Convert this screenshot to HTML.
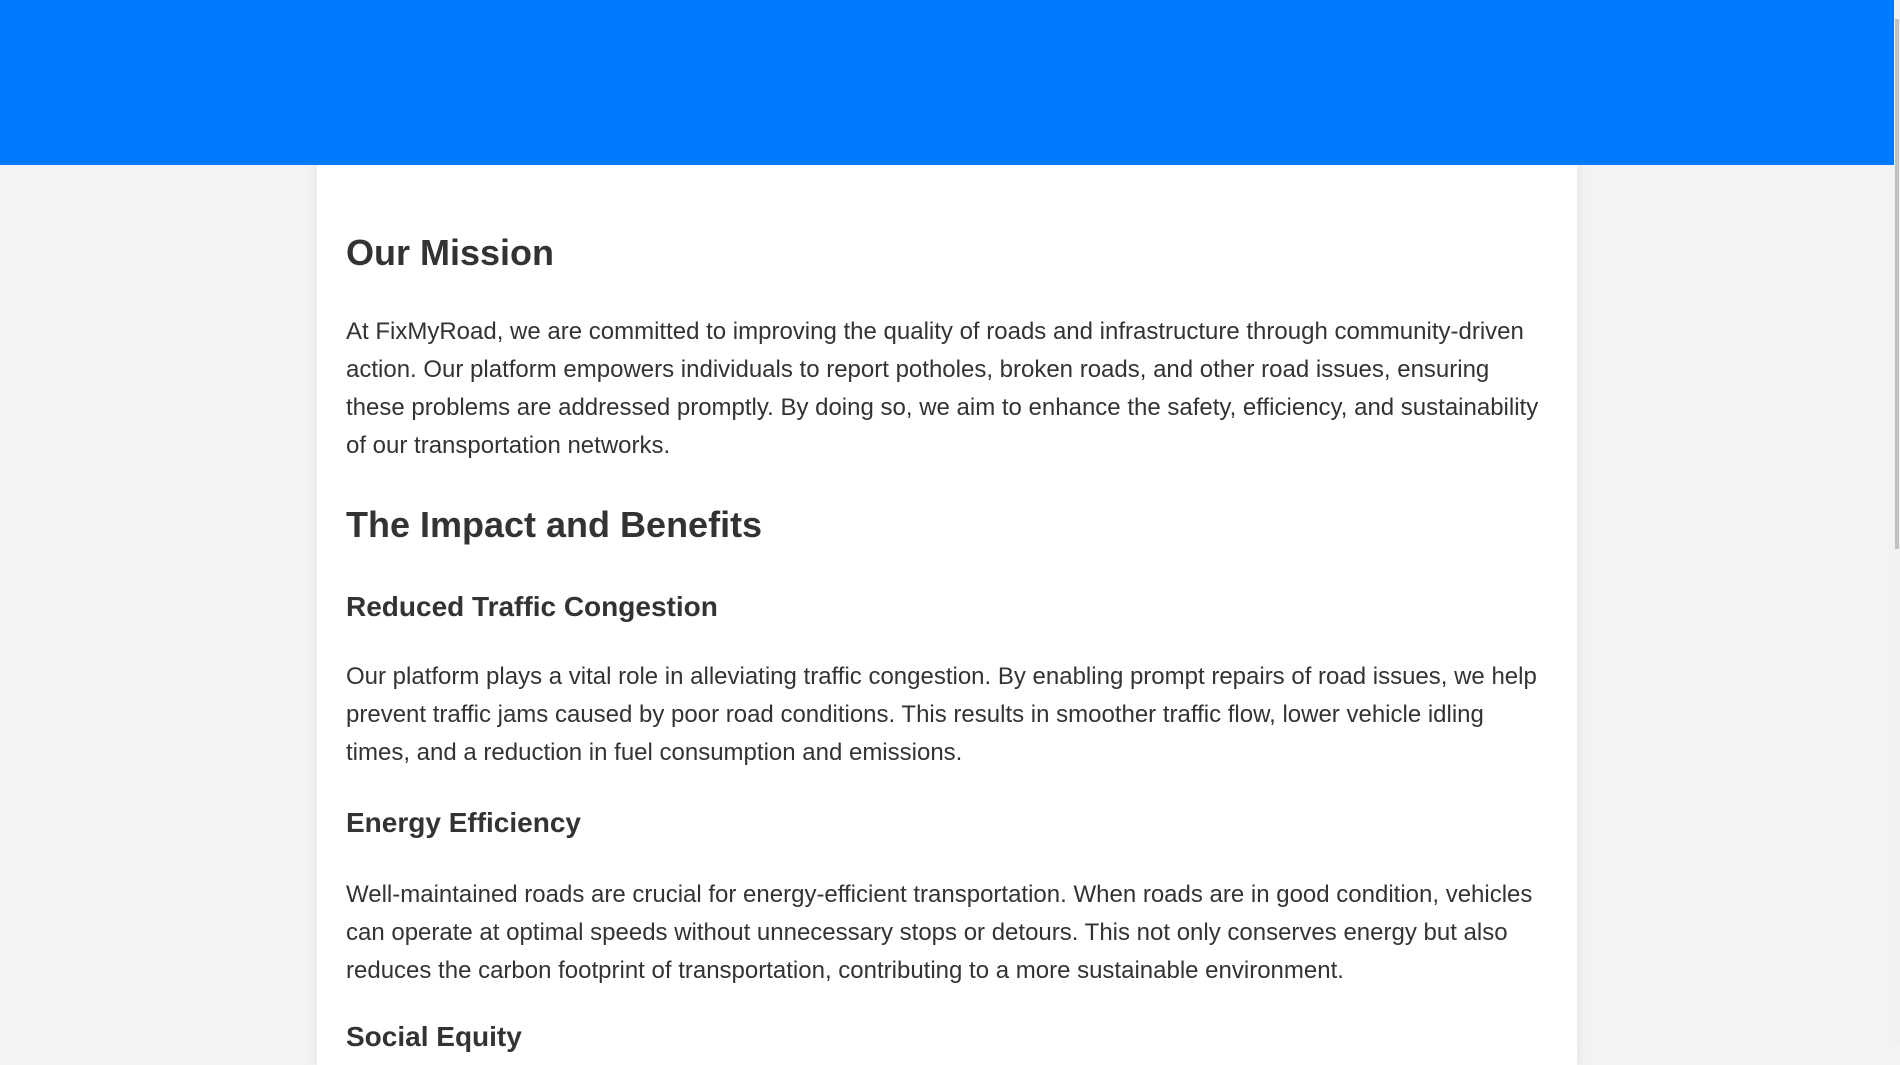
<!DOCTYPE html>
<html><head><meta charset="utf-8"><style>
html,body{margin:0;padding:0;}
body{width:1900px;height:1045px;overflow:hidden;background:#f3f3f3;font-family:"Liberation Sans",Arial,sans-serif;color:#333;position:relative;}
.hdr{position:absolute;left:0;top:0;width:1894px;height:165px;background:#007bff;}
.sb{position:absolute;right:0;top:0;width:6px;height:1045px;background:#f1f1f1;}
.sb i{position:absolute;left:1px;top:19px;width:4px;height:530px;background:#c1c1c1;}
.card{position:absolute;left:317px;top:165px;width:1260px;height:900px;background:#fff;box-shadow:0 0 12px rgba(0,0,0,0.08);box-sizing:border-box;padding:66px 29px 0 29px;}
h2{font-size:36px;line-height:43px;margin:0;font-weight:bold;}
h3{font-size:28px;line-height:31px;margin:0;font-weight:bold;}
p{font-size:24px;line-height:38px;margin:0;}
</style></head><body>
<div class="hdr"></div>
<div class="card">
<h2>Our Mission</h2>
<p style="margin-top:39px">At FixMyRoad, we are committed to improving the quality of roads and infrastructure through community-driven action. Our platform empowers individuals to report potholes, broken roads, and other road issues, ensuring these problems are addressed promptly. By doing so, we aim to enhance the safety, efficiency, and sustainability of our transportation networks.</p>
<h2 style="margin-top:37.5px">The Impact and Benefits</h2>
<h3 style="margin-top:45px">Reduced Traffic Congestion</h3>
<p style="margin-top:36.5px">Our platform plays a vital role in alleviating traffic congestion. By enabling prompt repairs of road issues, we help prevent traffic jams caused by poor road conditions. This results in smoother traffic flow, lower vehicle idling times, and a reduction in fuel consumption and emissions.</p>
<h3 style="margin-top:35px">Energy Efficiency</h3>
<p style="margin-top:38px">Well-maintained roads are crucial for energy-efficient transportation. When roads are in good condition, vehicles can operate at optimal speeds without unnecessary stops or detours. This not only conserves energy but also reduces the carbon footprint of transportation, contributing to a more sustainable environment.</p>
<h3 style="margin-top:31px">Social Equity</h3>
</div>
<div class="sb"><i></i></div>
</body></html>
